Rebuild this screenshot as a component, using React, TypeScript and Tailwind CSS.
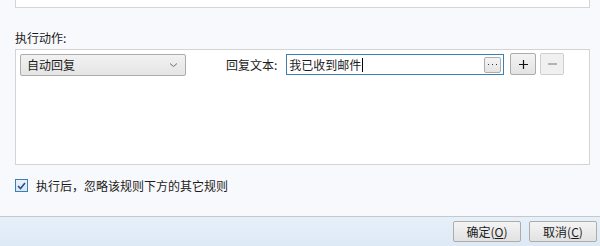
import React from "react";

export default function App() {
  const font = { fontFamily: '"Noto Sans CJK SC", "Noto Sans", sans-serif' };
  return (
    <div
      className="w-[600px] h-[246px] bg-[#f8f9fc] flex flex-col text-[12px] text-[#1b1b1b] overflow-hidden"
      style={font}
    >
      <div className="flex-1 flex flex-col pl-[15px] pr-[10px]">
        <div className="h-[8px] bg-white border-x border-b border-[#d4d4d4]" />
        <div className="mt-[22px] h-[16px] leading-[16px]">执行动作:</div>
        <div className="mt-[3px] h-[116px] bg-white border border-[#d4d4d4] pl-[4px] pt-[4px]">
          <div className="flex items-start">
            <div className="w-[166px] h-[22px] border border-[#acacac] rounded-[2px] bg-gradient-to-b from-[#f2f2f2] to-[#e5e5e5] flex items-center pl-[6px] pr-[8px] justify-between">
              <span className="leading-none">自动回复</span>
              <svg width="9" height="6" viewBox="0 0 9 6" className="mr-[-1px]">
                <path d="M1 1.5 L4.5 4.5 L8 1.5" fill="none" stroke="#6e6e6e" strokeWidth="1" />
              </svg>
            </div>
            <div className="ml-[40px] h-[22px] flex items-center leading-none">回复文本:</div>
            <div className="ml-[9px] w-[218px] h-[21px] border border-[#3c7fb1] bg-white flex items-center pl-[2px] pr-[2px]">
              <span className="leading-none">我已收到邮件</span>
              <span className="w-px h-[14px] bg-black ml-[1px]" />
              <div className="ml-auto w-[17px] h-[16px] border border-[#adadad] rounded-[2px] bg-gradient-to-b from-[#f4f4f4] to-[#e4e4e4] flex items-center justify-center">
                <svg width="11" height="3" viewBox="0 0 11 3">
                  <rect x="1" y="1" width="1" height="1" fill="#333" />
                  <rect x="5" y="1" width="1" height="1" fill="#333" />
                  <rect x="9" y="1" width="1" height="1" fill="#333" />
                </svg>
              </div>
            </div>
            <div className="ml-[6px] -mt-[1px] w-[26px] h-[22px] border border-[#acacac] rounded-[2px] bg-gradient-to-b from-[#f3f3f3] to-[#e3e3e3] flex items-center justify-center">
              <svg width="9" height="9" viewBox="0 0 9 9">
                <path d="M4.5 0 V9 M0 4.5 H9" stroke="#111" strokeWidth="1.2" />
              </svg>
            </div>
            <div className="ml-[4px] -mt-[1px] w-[24px] h-[22px] border border-[#cfcfcf] rounded-[2px] bg-[#f0f0f0] flex items-center justify-center">
              <svg width="9" height="2" viewBox="0 0 9 2">
                <path d="M0 1 H9" stroke="#8a8a8a" strokeWidth="1.2" />
              </svg>
            </div>
          </div>
        </div>
        <div className="mt-[14px] flex items-center">
          <div className="w-[13px] h-[13px] border border-[#3c7fb1] bg-gradient-to-b from-[#e8f2fb] to-[#d7e6f5] flex items-center justify-center">
            <svg width="9" height="8" viewBox="0 0 9 8">
              <path d="M1 4 L3.5 6.5 L8 1" fill="none" stroke="#2a4e86" strokeWidth="1.6" />
            </svg>
          </div>
          <span className="ml-[8px] leading-none">执行后，忽略该规则下方的其它规则</span>
        </div>
      </div>
      <div className="h-[30px] border-t border-[#c3c9d1] bg-gradient-to-b from-[#e7f0f9] to-[#dde9f5] flex items-start justify-end pr-[3px] pt-[4px]">
        <button className="w-[68px] h-[21px] border border-[#acacac] rounded-[2px] bg-gradient-to-b from-[#f4f4f4] to-[#e2e2e2] text-[12px] leading-none flex items-center justify-center" style={font}>
          确定(<span className="underline">O</span>)
        </button>
        <button className="ml-[8px] w-[68px] h-[21px] border border-[#acacac] rounded-[2px] bg-gradient-to-b from-[#f4f4f4] to-[#e2e2e2] text-[12px] leading-none flex items-center justify-center" style={font}>
          取消(<span className="underline">C</span>)
        </button>
      </div>
    </div>
  );
}
